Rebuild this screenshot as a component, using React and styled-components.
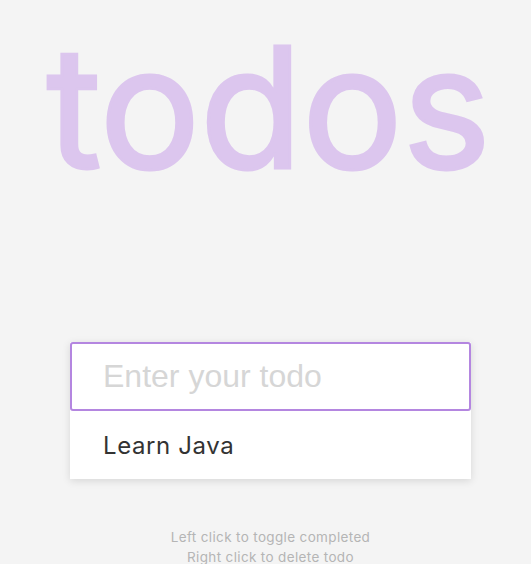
import React from "react";
import styled, { createGlobalStyle } from "styled-components";

const Global = createGlobalStyle`
  html, body { margin: 0; padding: 0; background: #f4f4f4; }
  body { font-family: "Inter", "Open Sans", sans-serif; }
`;

const Page = styled.div`
  width: 531px;
  min-height: 564px;
  display: flex;
  flex-direction: column;
  align-items: center;
  padding-left: 10px;
  box-sizing: border-box;
`;

const Title = styled.h1`
  margin: 0;
  margin-top: 17px;
  font-family: "Inter", sans-serif;
  font-weight: 400;
  font-size: 168px;
  line-height: 180px;
  letter-spacing: -0.5px;
  color: #dcc6ee;
  -webkit-text-stroke: 3px #dcc6ee;
  transform: translateX(-2px);
`;

const Card = styled.div`
  margin-top: 145px;
  width: 401px;
  background: #fff;
  box-shadow: 0 2px 8px rgba(0, 0, 0, 0.12);
`;

const Input = styled.input`
  display: block;
  width: 100%;
  height: 69px;
  box-sizing: border-box;
  border: 2px solid #b486e0;
  border-radius: 3px;
  padding: 0 0 0 31px;
  font-family: "Liberation Sans", Arial, sans-serif;
  font-size: 32px;
  color: #333;
  outline: none;
  &::placeholder { color: #d6d6d6; }
`;

const Item = styled.div`
  height: 68px;
  display: flex;
  align-items: center;
  padding-left: 33px;
  font-family: "Inter", sans-serif;
  font-size: 24px;
  letter-spacing: 0.6px;
  color: #333;
`;

const Hints = styled.div`
  margin-top: 48px;
  text-align: center;
  font-family: "Inter", sans-serif;
  font-size: 13.5px;
  letter-spacing: 0.35px;
  line-height: 20px;
  color: #b5b5b5;
`;

export default function App() {
  return (
    <>
      <Global />
      <Page>
        <Title>todos</Title>
        <Card>
          <Input placeholder="Enter your todo" />
          <Item>Learn Java</Item>
        </Card>
        <Hints>
          <div>Left click to toggle completed</div>
          <div>Right click to delete todo</div>
        </Hints>
      </Page>
    </>
  );
}
